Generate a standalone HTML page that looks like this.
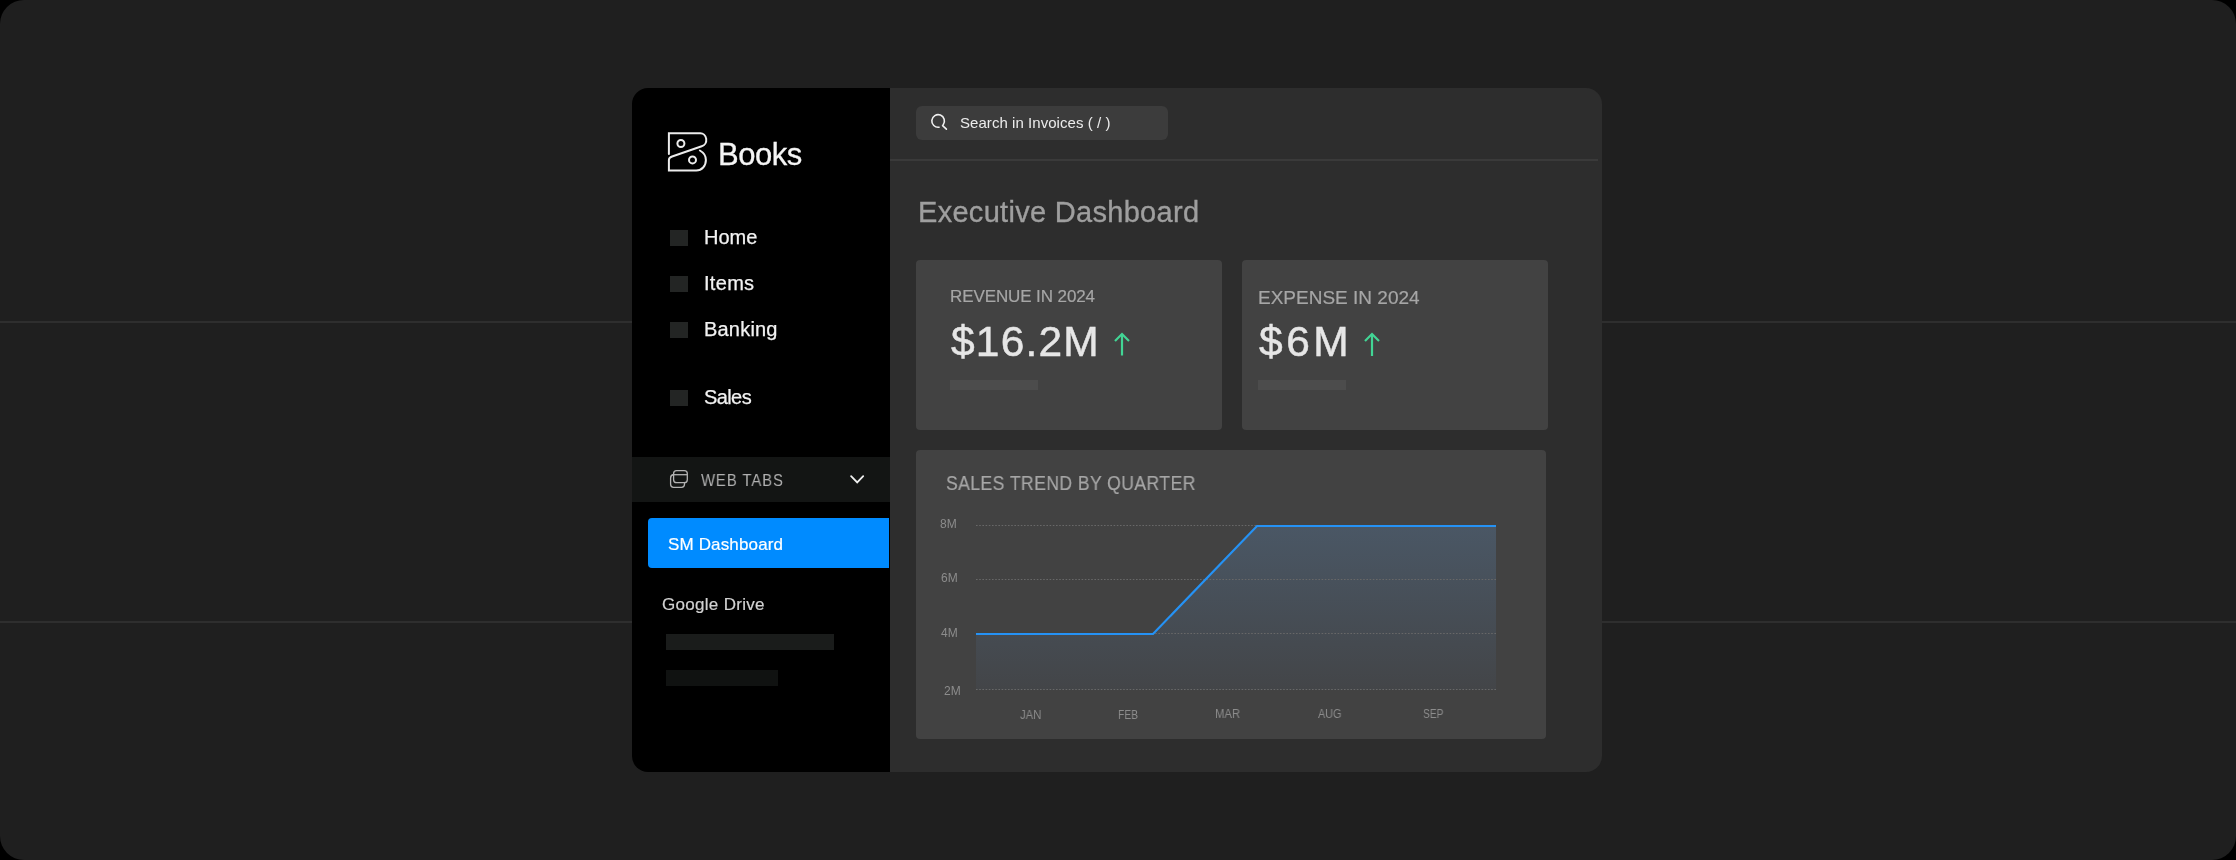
<!DOCTYPE html>
<html><head><meta charset="utf-8">
<style>
html,body{margin:0;padding:0;width:2236px;height:860px;overflow:hidden;background:#000;}
body{position:relative;font-family:"Liberation Sans",sans-serif;}
#bg{position:absolute;left:0;top:0;width:2236px;height:860px;border-radius:24px;background:#1f1f1f;overflow:hidden;}
.hl{position:absolute;left:0;width:2236px;height:2px;background:#2e2e2e;}
.a{position:absolute;}
.t{position:absolute;line-height:1;white-space:nowrap;will-change:transform;}
#side{position:absolute;left:632px;top:88px;width:258px;height:684px;background:#000;border-radius:16px 0 0 16px;}
#main{position:absolute;left:890px;top:88px;width:712px;height:684px;background:#2d2d2d;border-radius:0 16px 16px 0;}
.sq{position:absolute;left:670px;width:18px;height:16px;background:#232524;}
.nav{color:#f2f2f2;font-size:20px;left:704px;-webkit-text-stroke:0.25px #f2f2f2;}
.card{position:absolute;background:#424242;border-radius:4px;}
.bar{position:absolute;background:#4c4c4c;}
.lbl{color:#a6a6a6;-webkit-text-stroke:0.2px #a6a6a6;}
.val{color:#e6e6e6;-webkit-text-stroke:0.5px #e6e6e6;}
.ax{color:#8c8c8c;font-size:12px;}
</style></head>
<body>
<div id="bg">
  <div class="hl" style="top:321px"></div>
  <div class="hl" style="top:621px"></div>
</div>

<!-- sidebar -->
<div id="side"></div>
<svg class="a" style="left:660px;top:126px" width="60" height="52" viewBox="0 0 60 52" fill="none" stroke="#ececec" stroke-width="2" stroke-linecap="round" stroke-linejoin="miter">
  <path d="M8.9 28.1 V7.3 H39.9 A6 6.6 0 0 1 41.7 20.3 L12.1 30.5 Q8.9 31.6 8.9 33.9 V44.5 H36.3 C41.8 44.5 45.9 40 45.9 34 C45.9 30 44 26.8 39.9 24.5"/>
  <circle cx="20.9" cy="17.5" r="3.5"/>
  <circle cx="32.5" cy="33.9" r="3.5"/>
</svg>
<div class="t" style="left:718px;top:139px;font-size:31px;color:#f5f5f5;letter-spacing:-0.5px;-webkit-text-stroke:0.3px #f5f5f5">Books</div>
<div class="sq" style="top:230px"></div>
<div class="sq" style="top:276px"></div>
<div class="sq" style="top:322px"></div>
<div class="sq" style="top:390px"></div>
<div class="t nav" style="top:227px">Home</div>
<div class="t nav" style="top:273px;letter-spacing:0.3px">Items</div>
<div class="t nav" style="top:319px;letter-spacing:0.2px">Banking</div>
<div class="t nav" style="top:387px;letter-spacing:-0.6px">Sales</div>
<div class="a" style="left:632px;top:457px;width:258px;height:45px;background:#131514"></div>
<svg class="a" style="left:660px;top:460px" width="40" height="40" viewBox="0 0 40 40" fill="none" stroke="#b3b3b3" stroke-width="1.3">
  <rect x="13.6" y="10.6" width="13.7" height="12.1" rx="3"/>
  <path d="M13.6 14.7 H27.3"/>
  <path d="M13.6 14.5 Q10.6 15 10.6 18 V24.3 Q10.6 27.3 13.6 27.3 H21.5 Q24.5 27.3 24.5 24.3 V22.7"/>
</svg>
<div class="t" style="left:701px;top:471.5px;font-size:16.5px;color:#b0b0b0;letter-spacing:1.05px;transform:scaleX(0.9);transform-origin:0 0">WEB TABS</div>
<svg class="a" style="left:840px;top:465px" width="40" height="30" viewBox="0 0 40 30" fill="none" stroke="#f0f0f0" stroke-width="1.8" stroke-linecap="round">
  <path d="M11.1 11.2 L17.2 17.4 L23.2 11.2"/>
</svg>
<div class="a" style="left:648px;top:518px;width:241px;height:50px;background:#008bff;border-radius:4px 0 0 4px"></div>
<div class="t" style="left:667.5px;top:536px;font-size:17px;color:#fff;letter-spacing:0.15px;-webkit-text-stroke:0.2px #fff">SM Dashboard</div>
<div class="t" style="left:661.5px;top:596px;font-size:17px;color:#d2d2d2;letter-spacing:0.3px;-webkit-text-stroke:0.2px #d2d2d2">Google Drive</div>
<div class="a" style="left:666px;top:634px;width:168px;height:16px;background:#1a1c1b"></div>
<div class="a" style="left:666px;top:670px;width:112px;height:16px;background:#101211"></div>


<!-- main -->
<div id="main"></div>
<div class="a" style="left:916px;top:106px;width:252px;height:34px;background:#3c3c3c;border-radius:6px"></div>
<svg class="a" style="left:925px;top:108px" width="30" height="28" viewBox="0 0 30 28" fill="none" stroke="#f0f0f0" stroke-width="1.6" stroke-linecap="round">
  <path d="M18.2 16.7 A6.3 6.3 0 1 0 14.1 19.2"/>
  <path d="M17.6 17.6 L21.4 21.2"/>
</svg>
<div class="t" style="left:960px;top:115px;font-size:15px;color:#ececec;letter-spacing:0.05px">Search in Invoices ( / )</div>
<div class="a" style="left:890px;top:159px;width:708px;height:2px;background:#3a3a3a"></div>
<div class="t" style="left:918px;top:198px;font-size:29px;color:#9f9f9f;letter-spacing:0.3px;-webkit-text-stroke:0.35px #9f9f9f">Executive Dashboard</div>

<div class="card" style="left:916px;top:260px;width:306px;height:170px"></div>
<div class="card" style="left:1242px;top:260px;width:306px;height:170px"></div>
<div class="t lbl" style="left:950px;top:287.5px;font-size:17px;letter-spacing:-0.1px">REVENUE IN 2024</div>
<div class="t lbl" style="left:1258px;top:288px;font-size:19px">EXPENSE IN 2024</div>
<div class="t val" style="left:951px;top:320.5px;font-size:42.5px;letter-spacing:1.2px">$16.2M</div>
<div class="t val" style="left:1259px;top:320.5px;font-size:42.5px;letter-spacing:3.5px">$6M</div>
<svg class="a" style="left:1110px;top:330px" width="24" height="28" viewBox="0 0 24 28" fill="none" stroke="#42d595" stroke-width="2.2">
  <path d="M12 25.5 V4"/><path d="M5 11 L12 4 L19 11"/>
</svg>
<svg class="a" style="left:1360px;top:330px" width="24" height="28" viewBox="0 0 24 28" fill="none" stroke="#42d595" stroke-width="2.2">
  <path d="M12 26 V4"/><path d="M5 11 L12 4 L19 11"/>
</svg>
<div class="bar" style="left:950px;top:380px;width:88px;height:10px"></div>
<div class="bar" style="left:1258px;top:380px;width:88px;height:10px"></div>

<div class="card" style="left:916px;top:450px;width:630px;height:289px"></div>
<div class="t lbl" style="left:946px;top:474px;font-size:19.5px;letter-spacing:0.5px;transform:scaleX(0.9);transform-origin:0 0">SALES TREND BY QUARTER</div>
<svg class="a" style="left:916px;top:450px" width="630" height="289" viewBox="916 450 630 289">
  <defs>
    <linearGradient id="fg" gradientUnits="userSpaceOnUse" x1="0" y1="526" x2="0" y2="690">
      <stop offset="0" stop-color="#4a5765"/>
      <stop offset="1" stop-color="#434548"/>
    </linearGradient>
  </defs>
  <path d="M976 634 H1153 L1257 526 H1496 V690 H976 Z" fill="url(#fg)"/>
  <g stroke="#686868" stroke-width="1" stroke-dasharray="1.6 1.6">
    <path d="M976 525.5 H1496"/>
    <path d="M976 579.5 H1496"/>
    <path d="M976 633.5 H1496"/>
    <path d="M976 689.5 H1496"/>
  </g>
  <path d="M976 634 H1153 L1257 526 H1496" fill="none" stroke="#2592f5" stroke-width="2.2"/>
</svg>
<div class="t ax" style="left:940px;top:518px">8M</div>
<div class="t ax" style="left:941px;top:572px">6M</div>
<div class="t ax" style="left:941px;top:627px">4M</div>
<div class="t ax" style="left:943.5px;top:684.5px">2M</div>
<div class="t ax" style="left:1019.5px;top:709px;transform:scaleX(0.94);transform-origin:0 0">JAN</div>
<div class="t ax" style="left:1118px;top:709px;transform:scaleX(0.86);transform-origin:0 0">FEB</div>
<div class="t ax" style="left:1215px;top:708px;transform:scaleX(0.94);transform-origin:0 0">MAR</div>
<div class="t ax" style="left:1317.5px;top:708px;transform:scaleX(0.9);transform-origin:0 0">AUG</div>
<div class="t ax" style="left:1422.5px;top:708px;transform:scaleX(0.85);transform-origin:0 0">SEP</div>


</body></html>
